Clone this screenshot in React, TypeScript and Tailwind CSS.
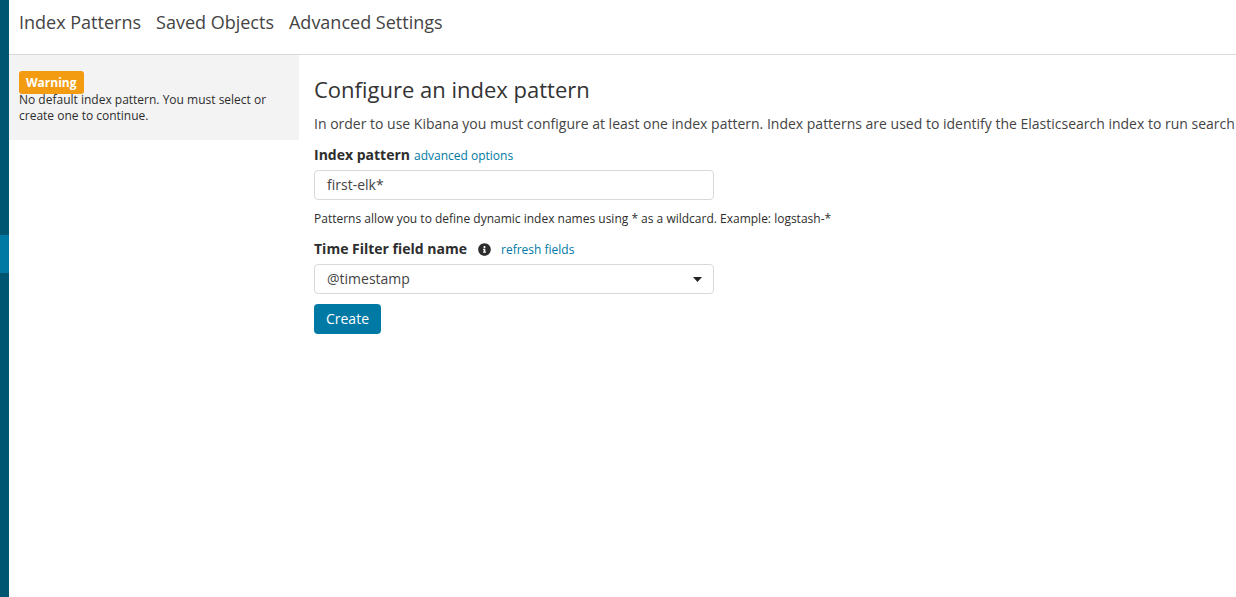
import { FaInfoCircle } from 'react-icons/fa'

const FONT = "font-['Open_Sans',sans-serif]"

function SideRail() {
  return (
    <div className="w-[9px] flex-shrink-0 flex flex-col bg-[#005571]">
      <div className="h-[235px]" />
      <div className="h-[38px] bg-[#0079a5]" />
    </div>
  )
}

function TopTabs() {
  return (
    <nav className="h-[55px] flex-shrink-0 flex gap-[15px] pl-[10px] pt-[10px] border-b border-[#d9d9d9] text-[18px] leading-[25px] text-[#444]">
      <a>Index Patterns</a>
      <a>Saved Objects</a>
      <a>Advanced Settings</a>
    </nav>
  )
}

function WarningPanel() {
  return (
    <aside className="w-[290px] h-[85px] flex-shrink-0 bg-[#f3f3f3] pt-4 px-[10px] text-[12px] leading-[16px] text-[#2d2d2d]">
      <span className="block w-fit h-[23px] px-[7px] rounded-[3px] bg-[#f39c12] text-white text-[12px] leading-[23px] font-bold">
        Warning
      </span>
      <p className="-mt-[2px]">No default index pattern. You must select or create one to continue.</p>
    </aside>
  )
}

function ConfigForm() {
  return (
    <section className="flex-1 min-w-0 overflow-hidden pl-[15px] pt-[19px] text-[#2d2d2d]">
      <h1 className="text-[22px] leading-[30px] font-normal text-[#333] whitespace-nowrap">Configure an index pattern</h1>
      <p className="mt-[10px] text-[14px] leading-[20px] text-[#444] whitespace-nowrap">
        In order to use Kibana you must configure at least one index pattern. Index patterns are used to identify the Elasticsearch index to run search and analytics against. They are also used to configure fields.
      </p>

      <div className="mt-[11px] flex items-baseline gap-1 h-[20px]">
        <label className="text-[14px] leading-[20px] font-bold">Index pattern</label>
        <a className="text-[12px] text-[#0079a5]">advanced options</a>
      </div>
      <div className="mt-[5px] w-[400px] h-[30px] border border-[#d9d9d9] rounded-[4px] pl-3 text-[14px] leading-[28px] text-[#444]">
        first-elk*
      </div>
      <p className="mt-[10px] text-[12px] leading-[17px]">
        Patterns allow you to define dynamic index names using * as a wildcard. Example: logstash-*
      </p>

      <div className="mt-[12px] flex items-center h-[20px]">
        <label className="text-[14px] leading-[20px] font-bold">Time Filter field name</label>
        <FaInfoCircle className="ml-[11px] text-[13px] text-[#2d2d2d]" />
        <a className="ml-[10px] mt-[2px] text-[12px] text-[#0079a5]">refresh fields</a>
      </div>
      <div className="mt-[5px] w-[400px] h-[30px] border border-[#d9d9d9] rounded-[4px] pl-3 pr-[11px] flex items-center justify-between text-[14px] leading-[20px] text-[#444]">
        <span className="-mt-[1px]">@timestamp</span>
        <svg width="9" height="5" viewBox="0 0 9 5" className="text-[#222]">
          <path d="M0 0h9L4.5 5z" fill="currentColor" />
        </svg>
      </div>
      <button className="mt-[10px] block w-[67px] h-[30px] pb-[2px] rounded-[4px] bg-[#0079a5] text-white text-[14px]">
        Create
      </button>
    </section>
  )
}

export default function App() {
  return (
    <div className={`${FONT} flex h-screen overflow-hidden bg-white`}>
      <SideRail />
      <div className="flex-1 min-w-0 flex flex-col">
        <TopTabs />
        <div className="flex flex-1 min-h-0">
          <WarningPanel />
          <ConfigForm />
        </div>
      </div>
    </div>
  )
}
